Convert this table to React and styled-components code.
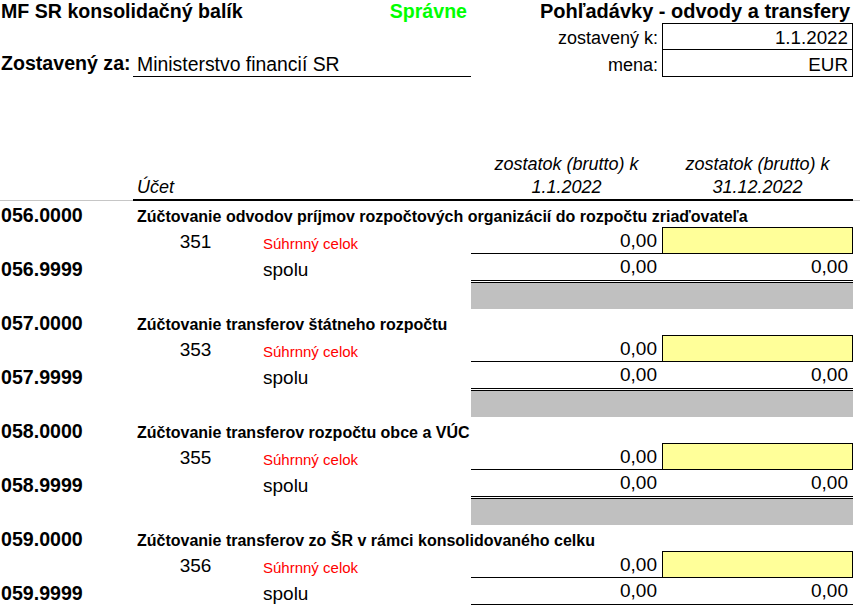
import React from 'react';
import styled, { createGlobalStyle } from 'styled-components';

const COLS = '133px 125px 213px 191px 191px 1fr';

const GlobalStyle = createGlobalStyle`
    body {
        margin: 0;
        background: #fff;
        font-family: "Liberation Sans", Arial, sans-serif;
        color: #000;
    }
`;

const Sheet = styled.div`
    width: 860px;
    height: 605px;
    overflow: hidden;
`;

const Row = styled.div`
    display: grid;
    grid-template-columns: ${COLS};
    height: ${(p) => p.$h}px;
`;

const Cell = styled.div`
    grid-column: ${(p) => p.$col || 'auto'};
    display: flex;
    align-items: flex-end;
    justify-content: ${(p) => p.$align || 'flex-start'};
    box-sizing: border-box;
    padding: 0 4px ${(p) => p.$lift || 0}px;
    font-size: ${(p) => p.$size || 19}px;
    font-weight: ${(p) => (p.$bold ? 'bold' : 'normal')};
    line-height: 1.15;
    white-space: nowrap;
    min-width: 0;
`;

const SheetTitle = styled(Cell)`
    font-size: 19.6px;
    font-weight: bold;
    padding-left: 1px;
`;

const Status = styled(Cell)`
    font-size: 19.6px;
    font-weight: bold;
    color: #00ff00;
`;

const Caption = styled(Cell)`
    font-size: 18px;
`;

const ValueBox = styled(Cell)`
    font-size: 18.8px;
    border: 1px solid #000;
    border-top-width: ${(p) => (p.$first ? 1 : 0)}px;
`;

const Entity = styled(Cell)`
    font-size: 19.4px;
    border-bottom: 1px solid #000;
`;

const HeadCell = styled(Cell)`
    font-style: italic;
    font-size: 18px;
    line-height: 23px;
    border-bottom: ${(p) => (p.$light ? '1px solid #c6c6c6' : '2px solid #000')};
    flex-direction: column;
    align-items: ${(p) => (p.$center ? 'center' : 'flex-start')};
    justify-content: flex-end;
`;

const Code = styled(Cell)`
    font-size: 19.6px;
    font-weight: bold;
    padding-left: 1px;
`;

const GroupTitle = styled(Cell)`
    font-size: 16px;
    font-weight: bold;
    padding-bottom: 1px;
`;

const Account = styled(Cell)`
    justify-content: center;
`;

const Note = styled(Cell)`
    color: #ff0000;
    font-size: 15px;
    padding-left: 5px;
`;

const Label = styled(Cell)`
    padding-left: 5px;
`;

const Amount = styled(Cell)`
    justify-content: flex-end;
    padding-right: 5px;
    border-bottom: ${(p) => (p.$rule === 'double' ? '3px double #000' : p.$rule === 'thin' ? '1px solid #000' : '0')};
`;

const Input = styled(Cell)`
    background: #ffff99;
    border: 1px solid #000;
`;

const Filler = styled.div`
    grid-column: ${(p) => p.$col};
    background: #c0c0c0;
`;

const groups = [
    { code: '056', account: '351', title: 'Zúčtovanie odvodov príjmov rozpočtových organizácií do rozpočtu zriaďovateľa' },
    { code: '057', account: '353', title: 'Zúčtovanie transferov štátneho rozpočtu' },
    { code: '058', account: '355', title: 'Zúčtovanie transferov rozpočtu obce a VÚC' },
    { code: '059', account: '356', title: 'Zúčtovanie transferov zo ŠR v rámci konsolidovaného celku' },
];

const Group = ({ code, account, title }) => (
    <React.Fragment>
        <Row $h={26}>
            <Code>{code}.0000</Code>
            <GroupTitle $col="2 / 6">{title}</GroupTitle>
        </Row>
        <Row $h={27}>
            <div />
            <Account $lift={1}>{account}</Account>
            <Note $lift={2}>Súhrnný celok</Note>
            <Amount $rule="thin" $lift={1}>0,00</Amount>
            <Input />
        </Row>
        <Row $h={29}>
            <Code $lift={2}>{code}.9999</Code>
            <div />
            <Label $lift={2}>spolu</Label>
            <Amount $rule="double" $lift={2}>0,00</Amount>
            <Amount $rule="double" $lift={2}>0,00</Amount>
        </Row>
        <Row $h={26}>
            <Filler $col="4 / 6" />
        </Row>
    </React.Fragment>
);

const App = () => {
    return (
        <Sheet>
            <GlobalStyle />
            <Row $h={23}>
                <SheetTitle $col="1 / 3">MF SR konsolidačný balík</SheetTitle>
                <Status $align="flex-end">Správne</Status>
                <SheetTitle $col="4 / 6" $align="flex-end" style={{ paddingRight: 3, fontSize: 20 }}>
                    Pohľadávky - odvody a transfery
                </SheetTitle>
            </Row>
            <Row $h={27}>
                <Caption $col="4" $align="flex-end" $lift={1}>zostavený k:</Caption>
                <ValueBox $col="5" $align="flex-end" $first>1.1.2022</ValueBox>
            </Row>
            <Row $h={27}>
                <Code $lift={2}>Zostavený za:</Code>
                <Entity $col="2 / 4" $lift={1}>Ministerstvo financií SR</Entity>
                <Caption $align="flex-end" $lift={1}>mena:</Caption>
                <ValueBox $align="flex-end">EUR</ValueBox>
            </Row>
            <Row $h={124}>
                <HeadCell $light />
                <HeadCell>Účet</HeadCell>
                <HeadCell />
                <HeadCell $center>
                    <span>zostatok (brutto) k</span>
                    <span>1.1.2022</span>
                </HeadCell>
                <HeadCell $center>
                    <span>zostatok (brutto) k</span>
                    <span>31.12.2022</span>
                </HeadCell>
                <HeadCell $light />
            </Row>
            {groups.map((g) => (
                <Group key={g.code} {...g} />
            ))}
        </Sheet>
    );
};

export default App;
